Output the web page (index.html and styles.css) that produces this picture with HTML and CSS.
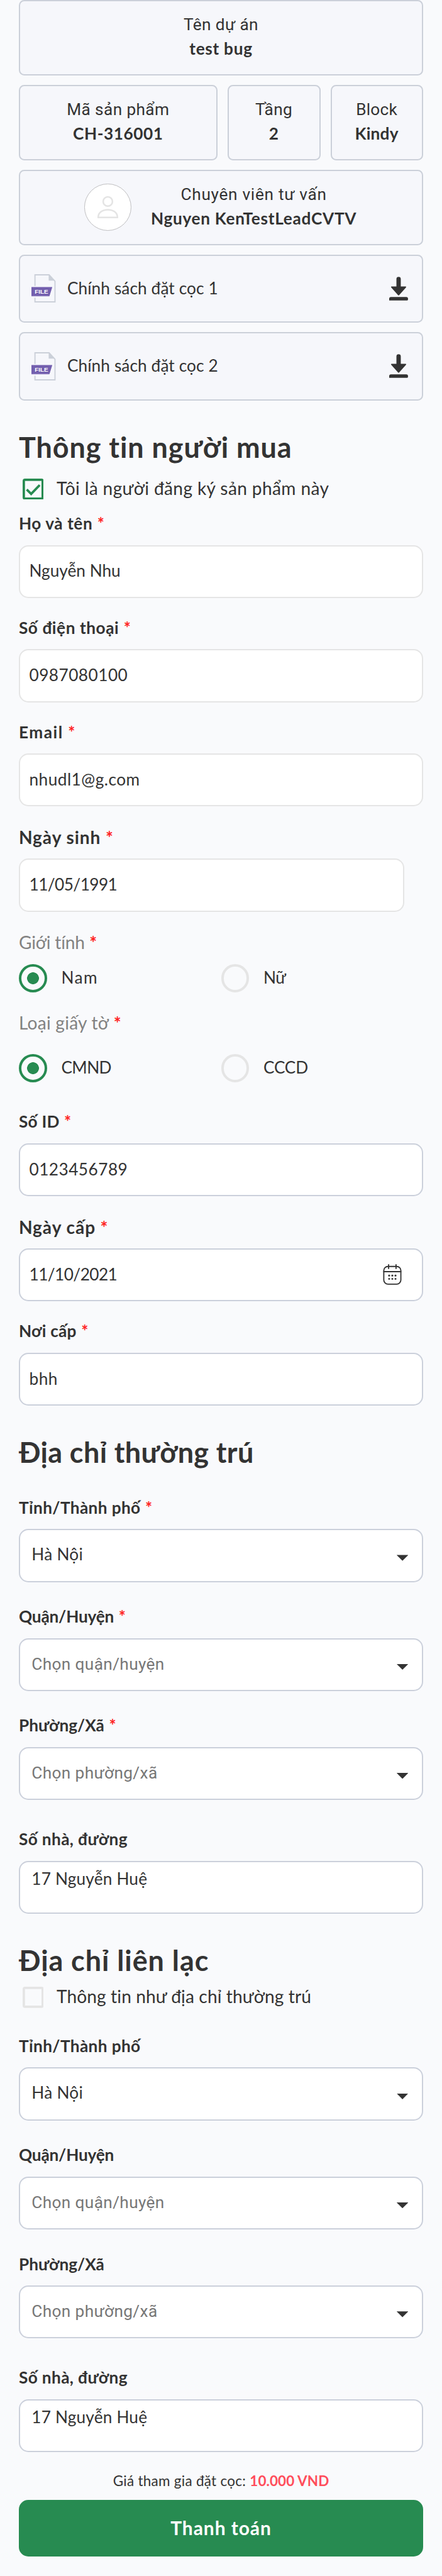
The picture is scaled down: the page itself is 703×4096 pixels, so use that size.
FILE: index.html
```html
<!DOCTYPE html>
<html lang="vi">
<head>
<meta charset="utf-8">
<title>Thông tin người mua</title>
<link rel="stylesheet" href="styles.css">
</head>
<body>
<svg class="defs" width="0" height="0">
  <symbol id="icon-file" viewBox="0 0 42 49">
    <path d="M6 20V1h24l10 11v35H6v-7" fill="none" stroke="#cbd0d9" stroke-width="2"/>
    <path d="M29.3 0v11h11z" fill="#cbd0d9"/>
    <path d="M0 22h35.3l-5 16H0z" fill="#cfc8e6"/>
    <path d="M0 22h35.3l-4.700 15H0z" fill="#735fae"/>
    <text x="5.600" y="32.800" font-family="Liberation Sans, Arial, sans-serif" font-size="9.800" font-weight="700" fill="#fff" textLength="22.600" lengthAdjust="spacingAndGlyphs">FILE</text>
  </symbol>
  <symbol id="icon-download" viewBox="0 0 32 41">
    <path d="M12.300 4a3.700 3.700 0 0 1 7.400 0v12.600H28c.9 0 1.100.9.6 1.500L17.200 31a1.600 1.600 0 0 1-2.400 0L3.400 18.100c-.5-.6-.3-1.500.6-1.500h8.300z" fill="#333"/>
    <path d="M0 40.300v-3a3 3 0 0 1 3-3h26a3 3 0 0 1 3 3v1.500a1.500 1.500 0 0 1-1.500 1.500z" fill="#333"/>
  </symbol>
  <symbol id="icon-calendar" viewBox="0 0 32 36">
    <g fill="none" stroke="#333" stroke-width="2">
      <rect x="1.500" y="4" width="29" height="30" rx="7"/>
      <path d="M1.500 12.800h29M9.700 1v6.500M22.300 1v6.500" stroke-linecap="round"/>
    </g>
    <g fill="#333">
      <circle cx="10.600" cy="19.600" r="1.600"/><circle cx="16" cy="19.600" r="1.600"/><circle cx="21.400" cy="19.600" r="1.600"/>
      <circle cx="10.600" cy="25" r="1.600"/><circle cx="16" cy="25" r="1.600"/><circle cx="21.400" cy="25" r="1.600"/>
    </g>
  </symbol>
</svg>
<main class="page">
  <section class="summary">
    <div class="card"><span class="caption tr-2">Tên dự án</span><b class="tr-4">test bug</b></div>
    <div class="cards">
      <div class="card"><span class="caption tr-2">Mã sản phẩm</span><b>CH-316001</b></div>
      <div class="card"><span class="caption tr-2">Tầng</span><b>2</b></div>
      <div class="card"><span class="caption tr-1">Block</span><b class="tr-1">Kindy</b></div>
    </div>
    <div class="card advisor">
      <svg class="avatar" viewBox="0 0 80 80">
        <circle cx="40" cy="40" r="39.500" fill="#fff" stroke="#b9b9bb"/>
        <g fill="none" stroke="#e4e4e4" stroke-width="2.700">
          <circle cx="40" cy="30.300" r="7.900"/>
          <path d="M23.700 57.400v-.8c0-7.200 6.600-12.400 16.300-12.400s16.300 5.200 16.300 12.400v.8z"/>
        </g>
      </svg>
      <div class="advisor-text"><span class="caption tr-4">Chuyên viên tư vấn</span><b class="tr-4">Nguyen KenTestLeadCVTV</b></div>
    </div>
    <div class="card file"><svg class="file-icon"><use href="#icon-file"/></svg><span class="file-name">Chính sách đặt cọc 1</span><svg class="download"><use href="#icon-download"/></svg></div>
    <div class="card file"><svg class="file-icon"><use href="#icon-file"/></svg><span class="file-name">Chính sách đặt cọc 2</span><svg class="download"><use href="#icon-download"/></svg></div>
  </section>

  <section class="buyer">
    <h2>Thông tin người mua</h2>
    <div class="check">
      <svg class="box" viewBox="0 0 36 36"><rect x="2" y="2" width="32" height="32" rx="2" fill="none" stroke="#278b51" stroke-width="4"/><path d="M7 18.500l7.500 7.500L29 11" fill="none" stroke="#278b51" stroke-width="4"/></svg>
      <span>Tôi là người đăng ký sản phẩm này</span>
    </div>
    <div class="field first"><div class="label">Họ và tên<i>*</i></div><div class="input soft tr-0">Nguyễn Nhu</div></div>
    <div class="field"><div class="label">Số điện thoại<i>*</i></div><div class="input soft">0987080100</div></div>
    <div class="field"><div class="label tr-6">Email<i>*</i></div><div class="input soft">nhudl1@g.com</div></div>
    <div class="field date"><div class="label big">Ngày sinh<i>*</i></div><div class="input soft short tr-n">11/05/1991</div></div>
    <div class="field choice">
      <div class="label light tr-m">Giới tính<i>*</i></div>
      <div class="radios"><div class="radio on"><span class="tr-6">Nam</span></div><div class="radio"><span class="tr-n">Nữ</span></div></div>
    </div>
    <div class="field choice spaced">
      <div class="label light tr-1">Loại giấy tờ<i>*</i></div>
      <div class="radios"><div class="radio on"><span class="tr-n">CMND</span></div><div class="radio"><span class="tr-m">CCCD</span></div></div>
    </div>
    <div class="field id"><div class="label tr-1">Số ID<i>*</i></div><div class="input">0123456789</div></div>
    <div class="field date"><div class="label big">Ngày cấp<i>*</i></div><div class="input tr-n">11/10/2021<svg class="calendar"><use href="#icon-calendar"/></svg></div></div>
    <div class="field"><div class="label tr-1">Nơi cấp<i>*</i></div><div class="input">bhh</div></div>
  </section>

  <section class="address">
    <h2 class="near tr-2">Địa chỉ thường trú</h2>
    <div class="field top"><div class="label tr-2">Tỉnh/Thành phố<i>*</i></div><div class="input select">Hà Nội</div></div>
    <div class="field wide"><div class="label tr-m">Quận/Huyện<i>*</i></div><div class="input select empty">Chọn quận/huyện</div></div>
    <div class="field wide"><div class="label tr-0">Phường/Xã<i>*</i></div><div class="input select empty">Chọn phường/xã</div></div>
    <div class="field wider"><div class="label tr-2">Số nhà, đường</div><div class="input area">17 Nguyễn Huệ</div></div>
  </section>

  <section class="contact">
    <h2 class="near">Địa chỉ liên lạc</h2>
    <div class="check under">
      <svg class="box" viewBox="0 0 36 36"><rect x="2" y="2" width="32" height="32" rx="2" fill="none" stroke="#e5e5e5" stroke-width="4"/></svg>
      <span>Thông tin như địa chỉ thường trú</span>
    </div>
    <div class="field top"><div class="label tr-2">Tỉnh/Thành phố</div><div class="input select">Hà Nội</div></div>
    <div class="field wide"><div class="label tr-m">Quận/Huyện</div><div class="input select empty">Chọn quận/huyện</div></div>
    <div class="field wide"><div class="label tr-0">Phường/Xã</div><div class="input select empty">Chọn phường/xã</div></div>
    <div class="field wider"><div class="label tr-2">Số nhà, đường</div><div class="input area">17 Nguyễn Huệ</div></div>
  </section>

  <footer class="pay">
    <p class="price">Giá tham gia đặt cọc: <b>10.000 VND</b></p>
    <div class="button">Thanh toán</div>
  </footer>
</main>
</body>
</html>
```
FILE: styles.css
```css
html { font-size: 9.3687px; }
*, *::before, *::after { box-sizing: border-box; }
body {
  margin: 0;
  background: #f9fafc;
  color: #333;
  font: 400 2.8rem/3.6rem Lato, "Open Sans", sans-serif;
}
.defs { display: none; }
svg { display: block; flex: none; }
.page { padding: 0 3.2rem 3.2rem; height: 437.2rem; }

/* Summary cards */
.summary { display: flex; flex-direction: column; gap: 1.6rem; }
.card {
  height: 12.8rem;
  border: 2px solid #cbd0d9;
  border-radius: .9rem;
  background: #f6f7fb;
  padding-top: 2.05rem;
  display: flex;
  flex-direction: column;
  align-items: center;
  line-height: 4rem;
}
.card b { letter-spacing: .06rem; white-space: nowrap; }
.caption { font-family: Roboto, "Open Sans", sans-serif; }
.cards { display: grid; grid-template-columns: 33.7rem 15.8rem 15.7rem; gap: 1.7rem; }
.advisor { flex-direction: row; padding: 0 0 0 10.9rem; gap: 3.3rem; }
.avatar { width: 8rem; height: 8rem; }
.advisor-text { display: flex; flex-direction: column; align-items: center; padding-bottom: .2rem; }
.file { height: 11.6rem; flex-direction: row; padding: 0 2.4rem 0 1.9rem; }
.file-icon { width: 4.2rem; height: 4.9rem; }
.file-name { flex: 1; padding: 0 0 .1rem 1.9rem; letter-spacing: .01rem; }
.download { width: 3.2rem; height: 4.1rem; }

/* Headings and check rows */
h2 { height: 6rem; margin: 4.8rem 0 0; padding-top: .1rem; font-size: 4.8rem; line-height: 6rem; letter-spacing: .1rem; }
h2.near { margin-top: 4.84rem; }
.check {
  display: flex;
  height: 3.6rem;
  margin-top: 2.4rem;
  padding-left: .6rem;
  gap: 2.2rem;
  font-size: 3rem;
  line-height: 3.2rem;
  letter-spacing: .04rem;
}
.check.under { margin-top: 1.56rem; letter-spacing: .013rem; }
.box { width: 3.6rem; height: 3.6rem; }

/* Fields */
.field { margin-top: 3.2rem; }
.field.first { margin-top: 2.2rem; }
.field.date { margin-top: 3.35rem; }
.field.choice { margin-top: 3.34rem; }
.field.id { margin-top: 4.8rem; }
.field.top { margin-top: 4.6rem; }
.field.wide { margin-top: 4rem; }
.field.wider { margin-top: 4.8rem; }
.label { height: 3.6rem; padding-top: .13rem; font-weight: 700; letter-spacing: .06rem; }
.label i { margin-left: .8rem; color: #f22; font-style: normal; font-weight: 700; letter-spacing: 0; }
.label.big { font-size: 3rem; letter-spacing: .1rem; }
.label.light { font-size: 3rem; font-weight: 400; color: #828282; }
.input {
  display: flex;
  align-items: center;
  height: 9rem;
  margin-top: 1.9rem;
  padding: 0 3.4rem .1rem 1.55rem;
  border: 2px solid #cbd0db;
  border-radius: 1.6rem;
  background: #fff;
  letter-spacing: .05rem;
}
.soft { border-color: #e5e5e5; }
.short { width: 65.4rem; }
.calendar { width: 3.2rem; height: 3.6rem; margin-left: auto; }
.select { padding: 0 2.3rem .3rem 1.95rem; letter-spacing: .03rem; }
.select::after {
  content: "";
  width: 2rem;
  height: 1rem;
  margin: 1.1rem 0 0 auto;
  background: #333;
  clip-path: polygon(0 0, 100% 0, 50% 100%);
}
.empty { color: #777; font-family: Roboto, "Open Sans", sans-serif; padding-bottom: 0; letter-spacing: .04rem; }
.empty::after { margin-top: .8rem; }
.area { align-items: flex-start; padding: 1.1rem 1.95rem; letter-spacing: .02rem; }

/* Radios */
.radios { display: grid; grid-template-columns: 1fr 1fr; margin-top: 1.96rem; }
.spaced .radios { margin-top: 3.56rem; }
.radio { display: flex; gap: 2.4rem; height: 4.8rem; line-height: 4.55rem; }
.radio::before {
  content: "";
  flex: none;
  width: 4.8rem;
  height: 4.8rem;
  border: 4px solid #e5e5e5;
  border-radius: 50%;
}
.radio.on::before {
  border-color: #278b51;
  background: radial-gradient(circle, #278b51 .97rem, transparent 1.03rem);
}

/* Payment */
.price { margin: 3.25rem 0 0; font-size: 2.4rem; line-height: 3.2rem; text-align: center; letter-spacing: .03rem; }
.price b { color: #ff4d5b; letter-spacing: .01rem; }
.button {
  height: 9.6rem;
  margin-top: 1.65rem;
  border-radius: 1.6rem;
  background: #278b51;
  color: #fff;
  font-size: 3.2rem;
  font-weight: 700;
  line-height: 9.4rem;
  text-align: center;
  letter-spacing: .1rem;
}

/* Tracking steps */
.page .tr-n { letter-spacing: -.06rem; }
.page .tr-m { letter-spacing: -.02rem; }
.page .tr-0 { letter-spacing: 0; }
.page .tr-1 { letter-spacing: .025rem; }
.page .tr-2 { letter-spacing: .04rem; }
.page .tr-4 { letter-spacing: .075rem; }
.page .tr-6 { letter-spacing: .16rem; }
```
